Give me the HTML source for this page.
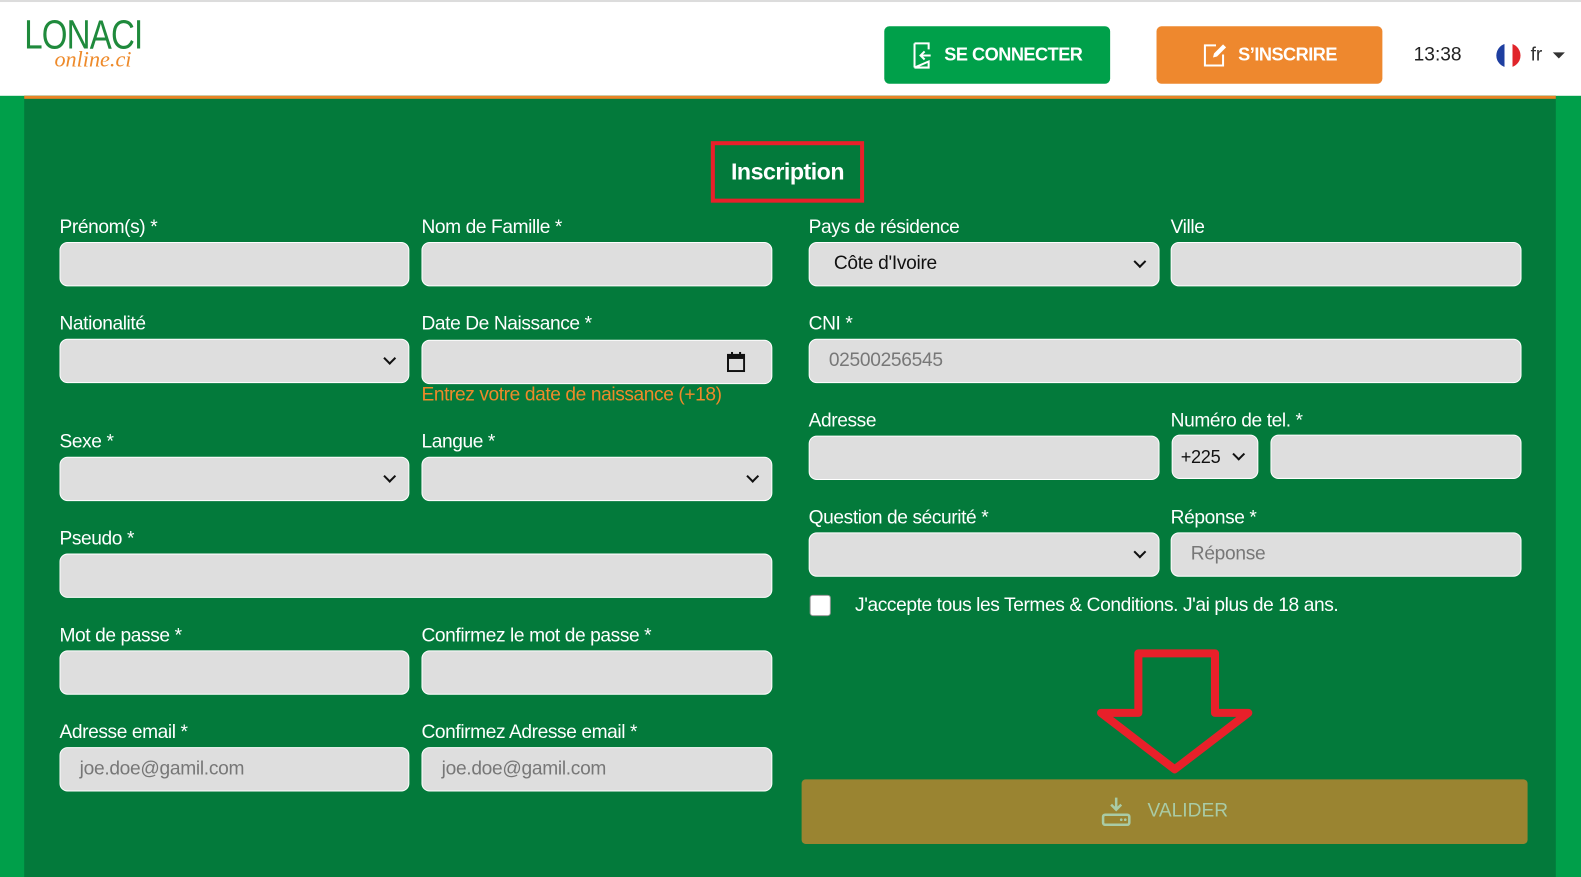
<!DOCTYPE html>
<html><head><meta charset="utf-8">
<style>
*{box-sizing:border-box;margin:0;padding:0}
html,body{width:1581px;height:870px;overflow:hidden;background:#009f4a}
#w{position:absolute;left:0;top:0;width:1568px;height:863px;transform:scale(1.00830);transform-origin:0 0;font-family:"Liberation Sans",sans-serif}
.hdr{position:absolute;left:0;top:0;width:1568px;height:95px;background:#fff;border-top:2px solid #dcdcdc}
.main{position:absolute;left:24px;top:95px;width:1519px;height:775px;background:#037a3b;border-top:3px solid #e98426}
.l{position:absolute;color:#fff;font-size:19px;letter-spacing:-0.4px;line-height:22px;white-space:nowrap}
.i{position:absolute;background:#dedede;border:1px solid #fff;border-radius:8px;height:44px;font-size:19px;color:#777;padding-left:19px;line-height:42px;letter-spacing:-0.3px}
.s::after{content:"";position:absolute;right:14px;top:14px;width:7px;height:7px;border-right:2px solid #111;border-bottom:2px solid #111;transform:rotate(45deg)}
.btn{position:absolute;top:24px;height:57px;border-radius:5px;color:#fff;font-weight:bold;font-size:18px;display:flex;align-items:center;justify-content:center;letter-spacing:-0.5px}
</style></head><body><div id="w">
<div class="hdr">
 <div style="position:absolute;left:24px;top:13px;color:#1f8a3c;font-size:40px;line-height:40px;transform:scaleX(0.82);transform-origin:0 0;letter-spacing:-1px">LONACI</div>
 <div style="position:absolute;left:54px;top:44px;color:#ee8a2a;font-size:22px;font-style:italic;font-family:'Liberation Serif',serif;line-height:26px">online.ci</div>
 <div class="btn" style="left:877px;width:224px;background:#00a04a">
  <svg width="22" height="28" viewBox="0 0 22 28" style="margin-right:10px"><path d="M3 2h14v6M17 20v6H3z" fill="none" stroke="#fff" stroke-width="2"/><path d="M3 2v24" stroke="#fff" stroke-width="2"/><path d="M19 14H9M13 10l-4 4 4 4" fill="none" stroke="#fff" stroke-width="2"/></svg>SE CONNECTER</div>
 <div class="btn" style="left:1147px;width:224px;background:#ee882e">
  <svg width="26" height="26" viewBox="0 0 26 26" style="margin-right:10px"><path d="M14 3H3v20h18V12" fill="none" stroke="#fff" stroke-width="2"/><path d="M11 15l1-4 9-9 3 3-9 9z" fill="#fff"/></svg>S’INSCRIRE</div>
 <div style="position:absolute;left:1402px;top:42px;font-size:19px;color:#222">13:38</div>
 <div style="position:absolute;left:1484px;top:41px;width:24px;height:24px;border-radius:50%;background:linear-gradient(90deg,#1e3ea0 33%,#fff 33% 66%,#e0242a 66%)"></div>
 <div style="position:absolute;left:1518px;top:42px;font-size:19px;color:#333">fr</div>
 <div style="position:absolute;left:1540px;top:50px;border-left:6px solid transparent;border-right:6px solid transparent;border-top:6px solid #333"></div>
</div>
<div class="main"></div>
<div style="position:absolute;left:705px;top:140px;width:152px;height:61px;border:4px solid #e8202a"></div>
<div style="position:absolute;left:705px;top:157px;width:152px;text-align:center;color:#fff;font-weight:bold;font-size:23px;letter-spacing:-0.5px">Inscription</div>

<div class="l" style="left:59px;top:215px">Prénom(s) *</div><div class="i" style="left:59px;top:240px;width:347px"></div>
<div class="l" style="left:418px;top:215px">Nom de Famille *</div><div class="i" style="left:418px;top:240px;width:348px"></div>
<div class="l" style="left:59px;top:311px">Nationalité</div><div class="i s" style="left:59px;top:336px;width:347px"></div>
<div class="l" style="left:418px;top:311px">Date De Naissance *</div><div class="i" style="left:418px;top:337px;width:348px">
 <svg width="18" height="20" viewBox="0 0 18 20" style="position:absolute;right:26px;top:11px"><rect x="1" y="3" width="16" height="16" fill="none" stroke="#111" stroke-width="2"/><rect x="1" y="3" width="16" height="4" fill="#111"/><path d="M5 0v4M13 0v4" stroke="#111" stroke-width="2"/></svg></div>
<div class="l" style="left:418px;top:381px;color:#ee8a2a">Entrez votre date de naissance (+18)</div>
<div class="l" style="left:59px;top:428px">Sexe *</div><div class="i s" style="left:59px;top:453px;width:347px"></div>
<div class="l" style="left:418px;top:428px">Langue *</div><div class="i s" style="left:418px;top:453px;width:348px"></div>
<div class="l" style="left:59px;top:524px">Pseudo *</div><div class="i" style="left:59px;top:549px;width:707px"></div>
<div class="l" style="left:59px;top:620px">Mot de passe *</div><div class="i" style="left:59px;top:645px;width:347px"></div>
<div class="l" style="left:418px;top:620px">Confirmez le mot de passe *</div><div class="i" style="left:418px;top:645px;width:348px"></div>
<div class="l" style="left:59px;top:716px">Adresse email *</div><div class="i" style="left:59px;top:741px;width:347px">joe.doe@gamil.com</div>
<div class="l" style="left:418px;top:716px">Confirmez Adresse email *</div><div class="i" style="left:418px;top:741px;width:348px">joe.doe@gamil.com</div>

<div class="l" style="left:802px;top:215px">Pays de résidence</div><div class="i s" style="left:802px;top:240px;width:348px;color:#111;padding-left:24px">Côte d'Ivoire</div>
<div class="l" style="left:1161px;top:215px">Ville</div><div class="i" style="left:1161px;top:240px;width:348px"></div>
<div class="l" style="left:802px;top:311px">CNI *</div><div class="i" style="left:802px;top:336px;width:707px">02500256545</div>
<div class="l" style="left:802px;top:407px">Adresse</div><div class="i" style="left:802px;top:432px;width:348px"></div>
<div class="l" style="left:1161px;top:407px">Numéro de tel. *</div><div class="i s" style="left:1162px;top:431px;width:86px;color:#111;padding-left:8px;font-size:18px">+225</div>
<div class="i" style="left:1260px;top:431px;width:249px"></div>
<div class="l" style="left:802px;top:503px">Question de sécurité *</div><div class="i s" style="left:802px;top:528px;width:348px"></div>
<div class="l" style="left:1161px;top:503px">Réponse *</div><div class="i" style="left:1161px;top:528px;width:348px">Réponse</div>
<div style="position:absolute;left:803px;top:590px;width:21px;height:21px;background:#fff;border-radius:3px;border:1px solid #999"></div>
<div class="l" style="left:848px;top:590px">J'accepte tous les Termes &amp; Conditions. J'ai plus de 18 ans.</div>

<svg style="position:absolute;left:1080px;top:640px" width="180" height="130" viewBox="0 0 180 130"><polygon points="49,8 125,8 125,67 158,67 85,123 12,67 49,67" fill="none" stroke="#e8202a" stroke-width="8" stroke-linejoin="round"/></svg>
<div style="position:absolute;left:795px;top:773px;width:720px;height:64px;background:#9a8431;border-radius:4px;color:#a9cba5;font-size:19px;display:flex;align-items:center;justify-content:center">
 <svg width="30" height="30" viewBox="0 0 30 30" style="margin-right:16px"><path d="M15 1v12M10 8l5 5 5-5" fill="none" stroke="#a9cba5" stroke-width="2.5"/><rect x="2" y="18" width="26" height="10" rx="2" fill="none" stroke="#a9cba5" stroke-width="2.5"/><circle cx="20" cy="23" r="1.3" fill="#a9cba5"/><circle cx="24" cy="23" r="1.3" fill="#a9cba5"/></svg>VALIDER</div>
</div></body></html>
